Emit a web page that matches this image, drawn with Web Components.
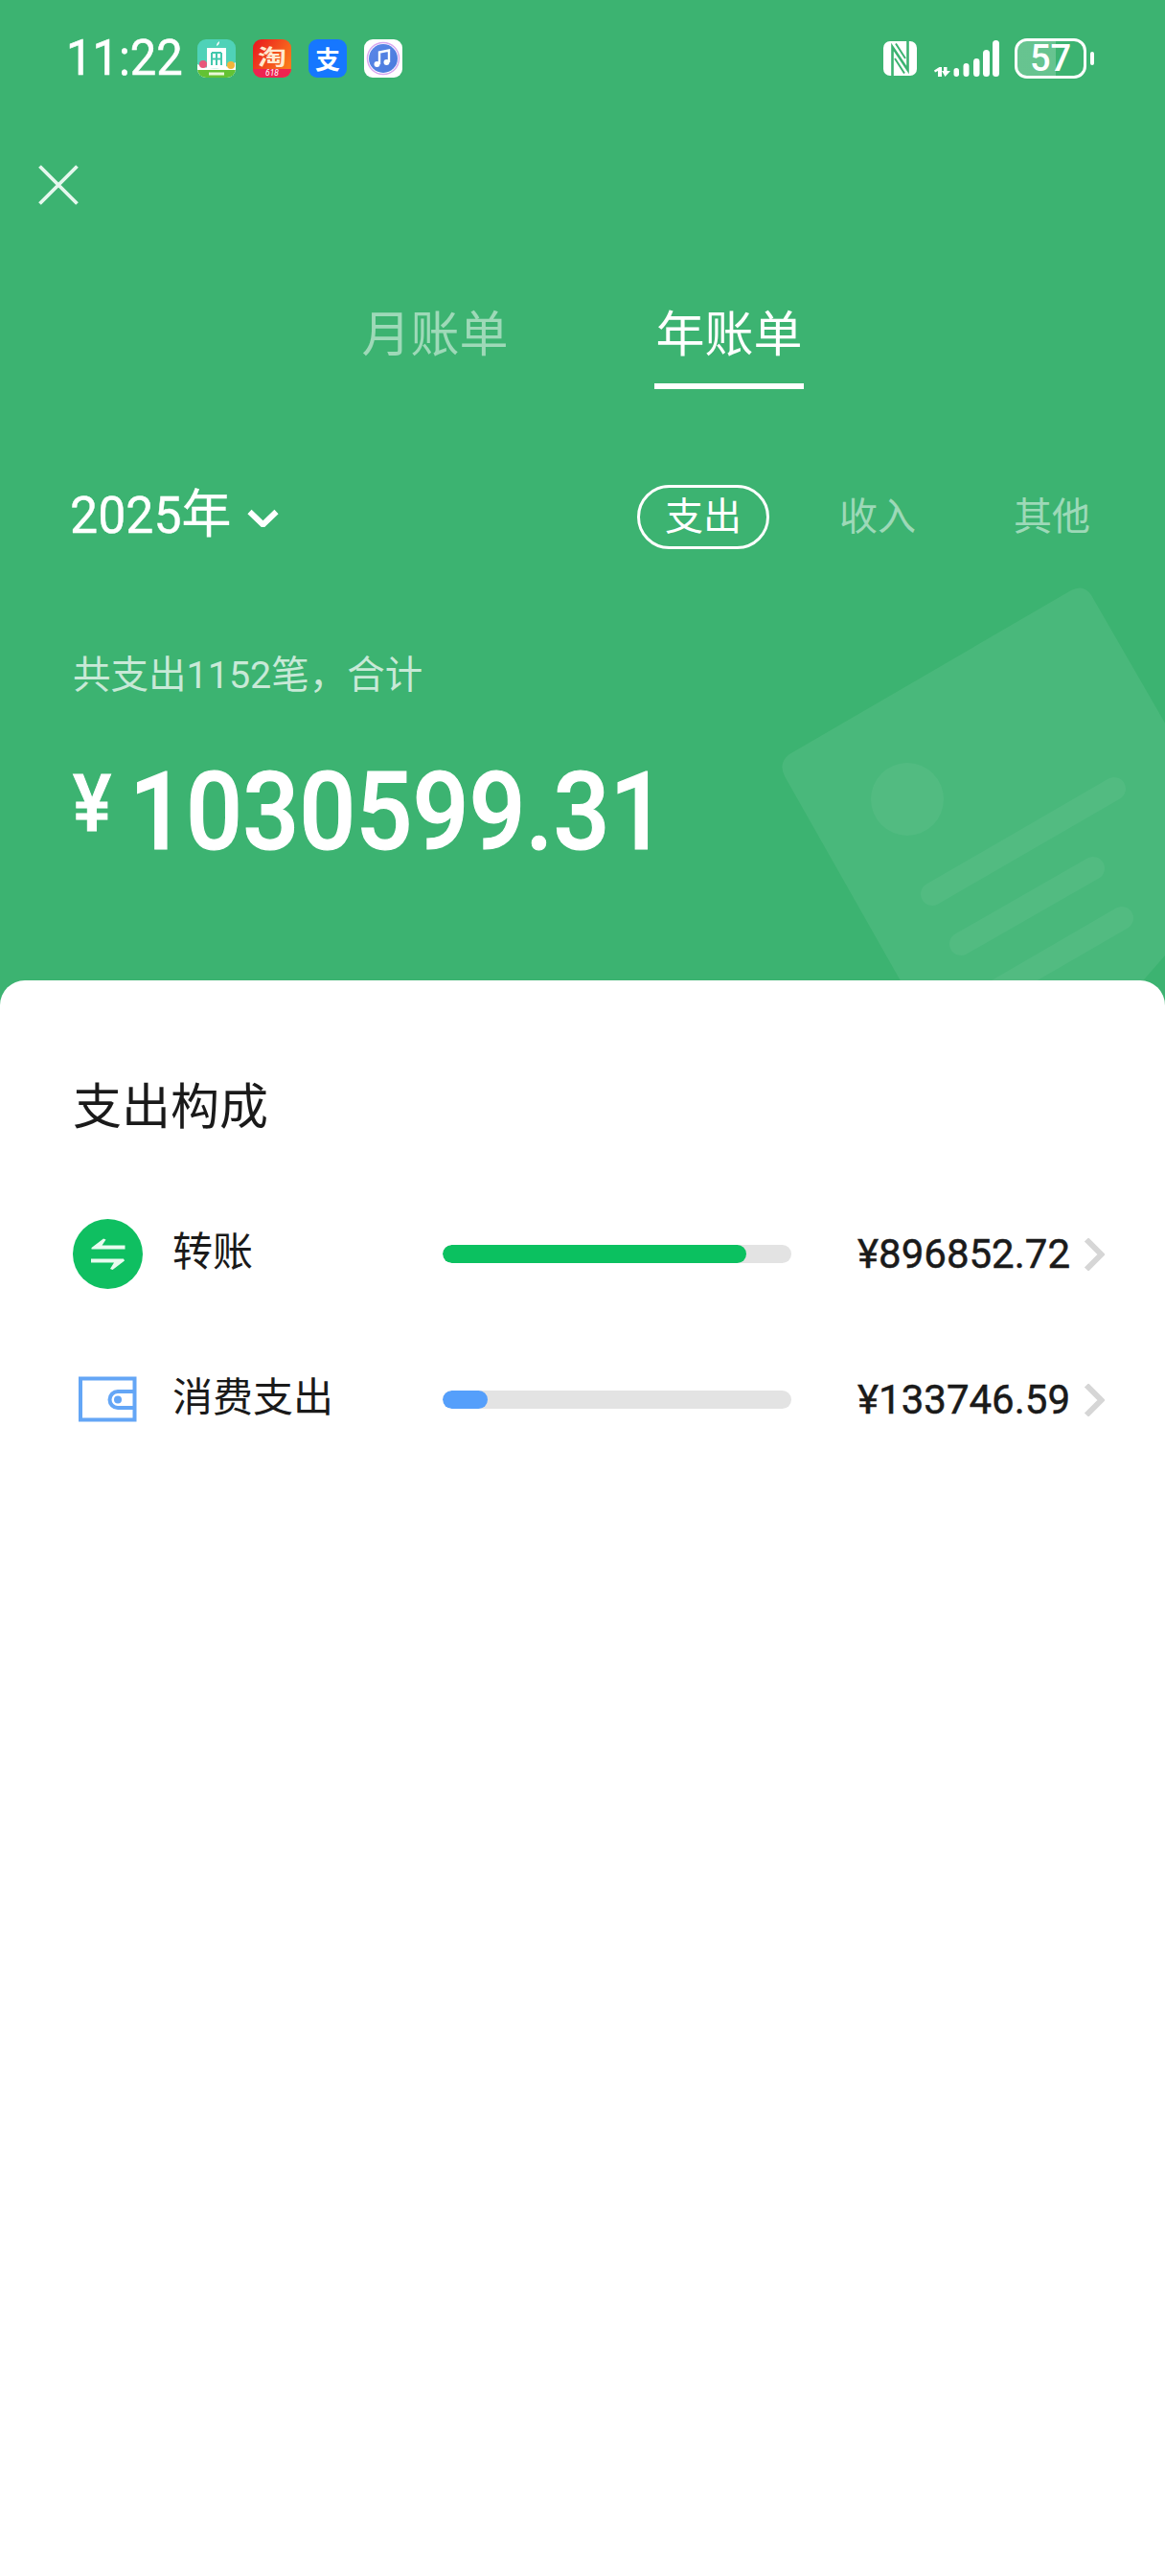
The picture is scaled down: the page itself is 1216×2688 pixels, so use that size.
<!DOCTYPE html>
<html lang="zh">
<head>
<meta charset="utf-8">
<title>年账单</title>
<style>
html,body{margin:0;padding:0;background:#fff;}
body{font-family:Roboto,"Noto Sans CJK SC",sans-serif;}
</style>
</head>
<body>
<bill-page>
  <status-bar slot="top">
    <app-icons></app-icons>
  </status-bar>
  <close-button slot="top"></close-button>
  <bill-tabs slot="top"></bill-tabs>
  <bill-filter slot="top" year="2025年"></bill-filter>
  <bill-total slot="top" note="共支出1152笔，合计" amount="1030599.31"></bill-total>

  <bill-row percent="87" color="#0bc160" amount="¥896852.72">
    <svg slot="icon" width="73" height="73" viewBox="0 0 73 73">
      <circle cx="36.5" cy="36.5" r="36.5" fill="#0fbf61"/>
      <path d="M20 31.500h34.500v-4H30.500l4-6-2.500-1L19.500 30v1.500zM53 41.500H19v4h24l-4 6.500 2.500 1L54 43.500z" fill="#e8fbef"/>
    </svg>
    转账
  </bill-row>
  <bill-row percent="13" color="#559ffb" amount="¥133746.59">
    <svg slot="icon" width="73" height="73" viewBox="0 0 73 73">
      <path d="M8 14.500h56.500v43H8z" fill="none" stroke="#64a6f6" stroke-width="4"/>
      <path d="M64.500 28H47a8.500 8.500 0 0 0 0 17h17.500" fill="none" stroke="#64a6f6" stroke-width="4"/>
      <circle cx="47" cy="36.500" r="4" fill="#64a6f6"/>
    </svg>
    消费支出
  </bill-row>
</bill-page>

<template id="tpl-status">
  <style>
    :host{display:flex;align-items:center;height:40px;padding:41px 74px 0 69px;color:#fff;}
    .time{font-size:52px;line-height:40px;width:137px;flex:none;white-space:nowrap;transform:scaleX(.94);transform-origin:left center;-webkit-text-stroke:.6px #fff;}
    .right{margin-left:auto;display:flex;align-items:center;}
    .nfc{margin-right:16px;}
    .signal{margin-right:16px;}
    .battery{width:75px;height:42px;box-sizing:border-box;border:3.500px solid #fff;border-radius:13px;display:flex;align-items:center;justify-content:center;font-size:38px;font-weight:500;line-height:36px;background:linear-gradient(90deg,rgba(255,255,255,.22) 58%,transparent 58%);background-clip:padding-box;}
    .tip{width:4px;height:14px;border-radius:2px;background:#fff;margin-left:4px;}
    svg{display:block;}
  </style>
  <div class="time">11:22</div>
  <slot></slot>
  <div class="right">
    <svg class="nfc" width="35" height="36" viewBox="0 0 35 36">
      <rect width="35" height="36" rx="7" fill="#fff"/>
      <path d="M9.500 36V6L25.500 30V0" fill="none" stroke="#3cb371" stroke-width="2.600"/>
      <path d="M13 2.500L23 18M12 18L22 33.500" fill="none" stroke="#3cb371" stroke-width="2"/>
    </svg>
    <svg class="signal" width="70" height="38" viewBox="0 0 70 38">
      <g fill="#fff">
        <path d="M2 31.500l5.500-3.500H10v10H6v-6l-3 1.500z"/>
        <path d="M12 28h3.500v4H19l-5.500 6-3.500-6h2z"/>
        <rect x="22.500" y="29" width="5.500" height="9" rx="2.700"/>
        <rect x="32.500" y="24" width="6" height="14" rx="3"/>
        <rect x="43" y="19" width="6.500" height="19" rx="3.200"/>
        <rect x="53" y="10" width="7" height="28" rx="3.500"/>
        <rect x="63" y="0" width="7" height="38" rx="3.500"/>
      </g>
    </svg>
    <div class="battery">57</div>
    <div class="tip"></div>
  </div>
</template>

<template id="tpl-icons">
  <style>
    :host{display:flex;gap:18px;}
    svg{display:block;}
    text{font-family:"Noto Sans CJK SC",sans-serif;}
    .small{font-family:Roboto,sans-serif;}
  </style>
  <svg width="40" height="40" viewBox="0 0 40 40">
    <defs><clipPath id="c1"><rect width="40" height="40" rx="9"/></clipPath></defs>
    <g clip-path="url(#c1)">
      <rect width="40" height="40" fill="#4fd2b8"/>
      <path d="M0 26c10 6 28 6 40-2v16H0z" fill="#fff"/>
      <rect y="32" width="40" height="8" fill="#63c234"/>
      <rect x="10" y="10" width="20" height="20" fill="#fff"/>
      <rect x="10" y="9" width="20" height="2.500" fill="#fff"/>
      <path d="M15 14v13M25 14v13M15 14h10M15 20.500h10M20 14v13" stroke="#43c8ad" stroke-width="2" fill="none"/>
      <circle cx="6" cy="26" r="4" fill="#e8577a"/>
      <circle cx="35" cy="27" r="4" fill="#f2b53a"/>
      <path d="M20 7c0-3 2-4 3-5 0 3-1 4-3 5z" fill="#fff"/>
      <rect x="12" y="34.500" width="16" height="3" fill="#e9f8d8"/>
    </g>
  </svg>
  <svg width="40" height="40" viewBox="0 0 40 40">
    <defs>
      <clipPath id="c2"><rect width="40" height="40" rx="9"/></clipPath>
      <linearGradient id="g2" x1="0" y1="0" x2="1" y2=".6"><stop offset="0" stop-color="#e8141f"/><stop offset="1" stop-color="#fb7a1c"/></linearGradient>
    </defs>
    <g clip-path="url(#c2)">
      <rect width="40" height="40" fill="url(#g2)"/>
      <rect y="31" width="40" height="9" fill="#ee2350"/>
      <text x="5" y="25.600" font-size="22" font-weight="700" textLength="30" lengthAdjust="spacingAndGlyphs" fill="#ffe9cf">淘</text>
      <text class="small" x="20" y="38" font-size="8.500" font-style="italic" fill="#fff" text-anchor="middle">618</text>
    </g>
  </svg>
  <svg width="40" height="40" viewBox="0 0 40 40">
    <rect width="40" height="40" rx="9" fill="#1677ff"/>
    <text x="20" y="30.500" font-size="26" font-weight="700" fill="#fff" text-anchor="middle">支</text>
  </svg>
  <svg width="40" height="40" viewBox="0 0 40 40">
    <defs><linearGradient id="g4" x1="0" y1="0" x2="1" y2="1"><stop offset="0" stop-color="#5a86e8"/><stop offset="1" stop-color="#4a7bdc"/></linearGradient></defs>
    <rect width="40" height="40" rx="9" fill="#fff"/>
    <circle cx="20" cy="20" r="16.500" fill="none" stroke="#d9a8ef" stroke-width="1.500"/>
    <circle cx="20" cy="20" r="15" fill="url(#g4)"/>
    <path d="M16 26V13.500l10-2V24" fill="none" stroke="#fff" stroke-width="2.400"/>
    <circle cx="13.500" cy="26" r="3" fill="#fff"/>
    <circle cx="23.500" cy="24" r="3" fill="#fff"/>
  </svg>
</template>

<template id="tpl-close">
  <style>
    :host{display:block;padding:91px 0 0 40px;height:42px;}
    svg{display:block;}
  </style>
  <svg width="42" height="42" viewBox="0 0 42 42"><path d="M1.500 1.500l39 39M40.500 1.500l-39 39" stroke="#e6f8ee" stroke-width="3.800" fill="none"/></svg>
</template>

<template id="tpl-tabs">
  <style>
    :host{display:flex;gap:151px;padding:101px 0 0 376px;}
    .tab{width:156px;text-align:center;font-size:51px;line-height:70px;height:91px;box-sizing:border-box;color:rgba(255,255,255,.5);}
    .on{color:#fff;border-bottom:6px solid #fff;}
  </style>
  <div class="tab">月账单</div>
  <div class="tab on">年账单</div>
</template>

<template id="tpl-filter">
  <style>
    :host{display:flex;align-items:center;height:67px;margin-top:100px;padding:0 49px 0 73px;color:#fff;}
    .year{font-size:54px;line-height:67px;margin-top:-4px;white-space:nowrap;transform:scaleX(.96);transform-origin:left center;-webkit-text-stroke:.4px #fff;}
    svg{display:block;margin-left:10px;margin-top:2px;}
    .chips{margin-left:auto;display:flex;gap:44px;}
    .chip{width:138px;height:67px;box-sizing:border-box;border:3px solid transparent;border-radius:34px;font-size:40px;line-height:61px;text-align:center;color:rgba(255,255,255,.5);}
    .on{border-color:#fff;color:#fff;}
  </style>
  <div class="year"></div>
  <svg width="33" height="19" viewBox="0 0 33 19"><path d="M2.500 3l14 13.500L30.500 3" fill="none" stroke="#fff" stroke-width="6"/></svg>
  <div class="chips">
    <div class="chip on">支出</div>
    <div class="chip">收入</div>
    <div class="chip">其他</div>
  </div>
</template>

<template id="tpl-total">
  <style>
    :host{display:block;padding:102px 0 0 76px;color:#fff;}
    .note{font-size:39.500px;line-height:60px;color:rgba(255,255,255,.72);}
    .amount{margin-top:53px;display:flex;align-items:baseline;line-height:120px;font-weight:500;}
    .yen{font-size:84px;width:59px;position:relative;top:-19px;transform:scaleX(.9);transform-origin:left center;-webkit-text-stroke:1px #fff;}
    .num{font-size:113px;transform:scaleX(.92);transform-origin:left center;-webkit-text-stroke:1.200px #fff;}
  </style>
  <div class="note"></div>
  <div class="amount"><span class="yen">¥</span><span class="num"></span></div>
</template>

<template id="tpl-page">
  <style>
    :host{display:flex;flex-direction:column;width:1216px;height:2688px;background:#3cb371;overflow:hidden;}
    header{position:relative;height:1023px;overflow:hidden;flex:none;}
    .deco{position:absolute;left:0;top:0;}
    .top{position:relative;}
    main{flex:1;background:#fff;border-radius:26px 26px 0 0;padding:0 63px 0 76px;color:#1a1a1a;}
    h2{margin:0;padding:98px 0 0 0;font-size:51px;font-weight:400;line-height:70px;}
    .rows{display:flex;flex-direction:column;gap:79px;margin-top:81px;}
  </style>
  <header>
    <svg class="deco" width="1216" height="1023" viewBox="0 0 1216 1023">
      <path d="M824 787L1118 616Q1131 609 1139 621L1300 900L1040 1200L819 810Q812 796 824 787z" fill="#fff" fill-opacity=".07"/>
      <circle cx="947" cy="834" r="38" fill="#fff" fill-opacity=".05"/>
      <path d="M973 933L1163 823M1003 985L1141 906M1171 958L1040 1034" stroke="#fff" stroke-opacity=".05" stroke-width="24" stroke-linecap="round" fill="none"/>
    </svg>
    <div class="top"><slot name="top"></slot></div>
  </header>
  <main>
    <h2>支出构成</h2>
    <div class="rows"><slot></slot></div>
  </main>
</template>

<template id="tpl-row">
  <style>
    :host{display:flex;align-items:center;height:73px;}
    .icon{width:73px;height:73px;flex:none;}
    .label{width:282px;flex:none;margin-left:31px;font-size:42px;line-height:60px;position:relative;top:-2px;}
    .bar{width:364px;height:19px;border-radius:10px;background:#e3e3e3;overflow:hidden;flex:none;}
    .fill{height:100%;border-radius:10px;}
    .amount{margin-left:auto;font-size:42px;line-height:62px;-webkit-text-stroke:.5px #1a1a1a;}
    svg{display:block;margin-left:14px;}
  </style>
  <div class="icon"><slot name="icon"></slot></div>
  <div class="label"><slot></slot></div>
  <div class="bar"><div class="fill"></div></div>
  <div class="amount"></div>
  <svg width="22" height="34" viewBox="0 0 22 34"><path d="M3 1.500L18.500 17L3 32.500" fill="none" stroke="#d6d6d6" stroke-width="6"/></svg>
</template>

<script>
// every element just clones its template into an open shadow root
function shadow(el, id){
  const root = el.attachShadow({mode:'open'});
  root.appendChild(document.getElementById(id).content.cloneNode(true));
  return root;
}

class BillPage extends HTMLElement{
  constructor(){ super(); shadow(this,'tpl-page'); }
}
class StatusBar extends HTMLElement{
  constructor(){ super(); shadow(this,'tpl-status'); }
}
class AppIcons extends HTMLElement{
  constructor(){ super(); shadow(this,'tpl-icons'); }
}
class CloseButton extends HTMLElement{
  constructor(){ super(); shadow(this,'tpl-close'); }
}
class BillTabs extends HTMLElement{
  constructor(){ super(); shadow(this,'tpl-tabs'); }
}
class BillFilter extends HTMLElement{
  constructor(){ super(); this.root = shadow(this,'tpl-filter'); }
  connectedCallback(){
    this.root.querySelector('.year').textContent = this.getAttribute('year');
  }
}
class BillTotal extends HTMLElement{
  constructor(){ super(); this.root = shadow(this,'tpl-total'); }
  connectedCallback(){
    this.root.querySelector('.note').textContent = this.getAttribute('note');
    this.root.querySelector('.num').textContent = this.getAttribute('amount');
  }
}
class BillRow extends HTMLElement{
  constructor(){ super(); this.root = shadow(this,'tpl-row'); }
  connectedCallback(){
    const fill = this.root.querySelector('.fill');
    fill.style.width = this.getAttribute('percent') + '%';
    fill.style.background = this.getAttribute('color');
    this.root.querySelector('.amount').textContent = this.getAttribute('amount');
  }
}

customElements.define('bill-page', BillPage);
customElements.define('status-bar', StatusBar);
customElements.define('app-icons', AppIcons);
customElements.define('close-button', CloseButton);
customElements.define('bill-tabs', BillTabs);
customElements.define('bill-filter', BillFilter);
customElements.define('bill-total', BillTotal);
customElements.define('bill-row', BillRow);
</script>
</body>
</html>
